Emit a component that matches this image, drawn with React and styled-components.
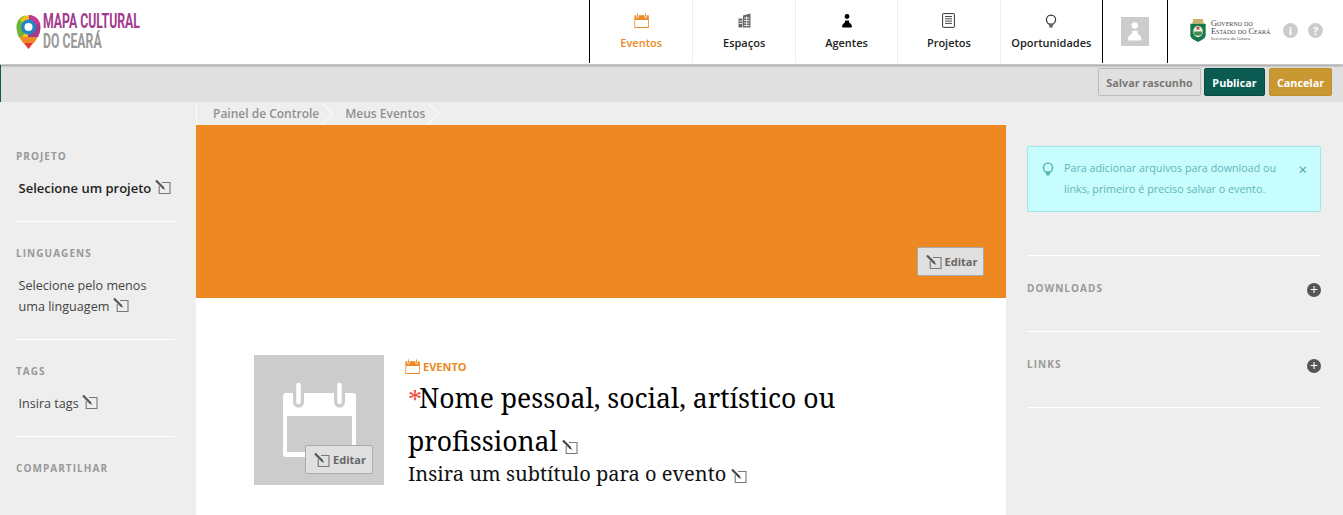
import styled, { createGlobalStyle } from "styled-components";

const GlobalStyle = createGlobalStyle`
    html, body {
        margin: 0;
        height: 100%;
        overflow: hidden;
        background: #eeeeee;
        font-family: "Open Sans", sans-serif;
    }
    * {
        box-sizing: border-box;
    }
`;

function CalendarIcon({ size = 16, color = "#ED8823" }) {
    return (
        <svg width={size} height={size * 78 / 76} viewBox="0 0 76 78">
            <path
                fill={color}
                fillRule="evenodd"
                d="M5 12h7v9a5.500 5.500 0 0 0 11 0v-9h30v9a5.500 5.500 0 0 0 11 0v-9h8a3 3 0 0 1 3 3v58a3 3 0 0 1-3 3H5a3 3 0 0 1-3-3V15a3 3 0 0 1 3-3zM6 35v36h65V35z"
            />
            <path stroke={color} strokeWidth="4.500" strokeLinecap="round" d="M17.500 4v17M58.500 4v17" />
        </svg>
    );
}

function BuildingIcon() {
    return (
        <svg width="13" height="15" viewBox="0 0 13 15">
            <path fill="#666" d="M5 2.500 12.500.500V14.500H5zM.5 5.500H4.400V14.500H.5z" />
            <path stroke="#fff" strokeWidth=".8" d="M6 5h5.500M6 7.500h5.500M6 10h5.500M6 12.500h5.500M8.600 3.500v10M1 8h3M1 10.500h3" />
        </svg>
    );
}

function PersonIcon({ height = 14, color = "#000" }) {
    return (
        <svg width={height * 10 / 14} height={height} viewBox="0 0 10 14">
            <circle cx="5" cy="2.500" r="2.400" fill={color} />
            <path fill={color} d="M.9 13.600c-.5 0-.8-.3-.8-.8C.1 11 1 10 2 9.300c.7-.5 1-1 1-1.600V6.500h4v1.200c0 .6.300 1.100 1 1.600 1 .7 1.900 1.700 1.900 3.500 0 .5-.3.800-.8.800z" />
        </svg>
    );
}

function DocIcon() {
    return (
        <svg width="13" height="15" viewBox="0 0 13 15" fill="none" stroke="#333">
            <rect x=".6" y=".6" width="11.800" height="13.800" rx=".6" />
            <path d="M3 3.500h7M3 5.800h7M3 8.100h7M3 10.400h7" strokeWidth=".9" />
        </svg>
    );
}

function BulbIcon({ size = 14, color = "#333", width = 1.2 }) {
    return (
        <svg width={size} height={size} viewBox="0 0 14 14" fill="none" stroke={color} strokeWidth={width}>
            <path d="M4.600 10C3.400 9 2.400 7.800 2.400 5.700a4.600 4.600 0 0 1 9.200 0C11.600 7.800 10.600 9 9.400 10z" />
            <path d="M5 11.200h4M5.500 12.800h3" />
        </svg>
    );
}

function EditIcon({ color = "#555" }) {
    return (
        <svg width="16" height="16" viewBox="0 0 16 16" fill="none">
            <path stroke="#777" strokeWidth="1.100" d="M7 3.500h8v11H4.200V7" />
            <path stroke={color} strokeWidth="2.200" d="M1 1.500 8.500 9" />
            <path fill={color} d="m8 7.600 2.600 3.500-3.600-1.800z" />
        </svg>
    );
}

function PinLogo() {
    return (
        <svg width="25" height="34" viewBox="0 0 25 34">
            <path fill="#E8352E" d="M7 27h11l-5.500 7z" />
            <path fill="#F08A24" d="M2.500 21h20L18 28H7z" />
            <path fill="#F5C01E" d="M.5 12h12v10H3z" />
            <path fill="#6BB536" d="M.5 13C0 6 5 1 9 .500L12.500 12 6 22H2.800C1.500 19 .7 16 .5 13z" />
            <path fill="#A23B8C" d="M12.500.100C19 .100 24.500 5.500 24.500 12c0 4-1 7-2.500 10H12z" />
            <path fill="#C8388F" d="M14 .300c5 .700 9 3.700 10 8.700L15 11z" />
            <path fill="#F5C01E" d="M4 5c2-3 6-5 9-4.800V8H7z" />
            <circle cx="12.500" cy="12" r="7.500" fill="#1E86C8" />
            <circle cx="12.500" cy="12" r="4" fill="#fff" />
        </svg>
    );
}

function GovShield() {
    return (
        <svg width="16" height="23" viewBox="0 0 16 24">
            <path fill="#C9B36A" d="M3 0h10l1 5H2z" />
            <path fill="#17784A" d="M0 5h16v12c0 3-4 5-8 7-4-2-8-4-8-7z" />
            <ellipse cx="8" cy="13" rx="5" ry="6" fill="#E8EED9" />
            <path fill="#4A8A55" d="M4 13h8v3c-1 2-7 2-8 0z" />
            <path fill="#A8574A" d="M6.500 8h3v3h-3z" />
        </svg>
    );
}

const Header = styled.header`
    height: 65px;
    background: #ffffff;
    display: flex;
    justify-content: space-between;
    box-shadow: 0 1px 2px rgba(0, 0, 0, 0.3);
    border-bottom: 1px solid #c8c8c8;
    position: relative;
    z-index: 2;
`;

const Logo = styled.div`
    display: flex;
    align-items: center;
    gap: 2px;
    padding: 0 0 1px 16px;
`;

const LogoText = styled.div`
    font-family: "Roboto", sans-serif;
    font-weight: 700;
    font-size: 20px;
    line-height: 19.500px;
    transform: scaleX(0.612);
    transform-origin: left center;
    white-space: nowrap;
    color: ${(props) => props.$color};
`;

const HeaderRight = styled.div`
    display: flex;
    height: 63px;
`;

const Nav = styled.nav`
    display: flex;
    border-left: 1px solid #000;
    border-right: 1px solid #000;
`;

const NavItem = styled.a`
    width: 102.400px;
    display: flex;
    flex-direction: column;
    align-items: center;
    padding-top: 12px;
    border-left: ${(props) => (props.$first ? "none" : "1px solid #eeeeee")};
    font-size: 11px;
    font-weight: 600;
    color: ${(props) => (props.$active ? "#ED8823" : "#222")};
`;

const NavIcon = styled.div`
    height: 17px;
    display: flex;
    align-items: center;
    margin-bottom: 6px;
`;

const UserBox = styled.div`
    width: 65px;
    border-right: 1px solid #000;
    display: flex;
    align-items: center;
    justify-content: center;
`;

const Avatar = styled.div`
    width: 28px;
    height: 29px;
    background: #cccccc;
    display: flex;
    align-items: center;
    justify-content: center;
`;

const Gov = styled.div`
    width: 175px;
    display: flex;
    align-items: center;
    padding: 0 0 2px 22px;
`;

const GovText = styled.div`
    margin-left: 5px;
    font-family: "Liberation Serif", serif;
    font-size: 8.300px;
    line-height: 8px;
    font-variant: small-caps;
    color: #444;
    width: 62px;
    white-space: nowrap;

    small {
        display: block;
        font-family: "Open Sans", sans-serif;
        font-variant: normal;
        font-size: 4px;
        line-height: 6px;
    }
`;

const RoundIcon = styled.span`
    width: 15px;
    height: 15px;
    border-radius: 50%;
    background: #cccccc;
    color: #fff;
    font-size: 11px;
    font-weight: 700;
    display: flex;
    align-items: center;
    justify-content: center;
    margin-left: ${(props) => props.$gap}px;
`;

const Toolbar = styled.div`
    height: 37px;
    background: #e0e0e0;
    border-left: 1px solid #0a5c52;
    display: flex;
    justify-content: flex-end;
    align-items: flex-start;
    padding: 3px 11px 0 0;
`;

const ToolButton = styled.button`
    width: ${(props) => props.$width}px;
    height: 28px;
    margin-left: ${(props) => props.$gap}px;
    padding: 0;
    border-radius: 2px;
    font-family: inherit;
    font-size: 10.800px;
    font-weight: 700;
    border: 1px solid ${(props) => props.$border};
    background: ${(props) => props.$bg};
    color: ${(props) => props.$color};
`;

const Main = styled.main`
    display: grid;
    grid-template-columns: 196px 810px 337px;
    height: 413px;
    overflow: hidden;
`;

const LeftBar = styled.aside`
    padding: 46px 21px 0 16px;
`;

const SideSection = styled.section`
    padding-bottom: ${(props) => (props.$last ? 0 : 22)}px;
    margin-bottom: 23.100px;
    border-bottom: ${(props) => (props.$last ? "none" : "1px solid #ffffff")};
`;

const SideLabel = styled.h4`
    margin: 0 0 14px;
    font-size: 10px;
    line-height: 16px;
    font-weight: 700;
    letter-spacing: 1.050px;
    color: #999999;
`;

const SideValue = styled.p`
    margin: 0 0 0 2.500px;
    font-size: ${(props) => (props.$strong ? 13 : 12.6)}px;
    line-height: 21px;
    font-weight: ${(props) => (props.$strong ? 600 : 400)};
    color: ${(props) => (props.$strong ? "#222" : "#444")};

    svg {
        vertical-align: -2px;
    }
`;

const Center = styled.div`
    background: #ffffff;
    display: flex;
    flex-direction: column;
`;

const Breadcrumb = styled.div`
    height: 23px;
    background: #eeeeee;
    display: flex;
    font-size: 12px;
    font-weight: 600;
    color: #909090;
    border-left: 1px solid #fafafa;
`;

const Crumb = styled.span`
    position: relative;
    line-height: 23px;
    padding: 0 11px 0 ${(props) => props.$left}px;

    &::after {
        content: "";
        position: absolute;
        right: 0;
        top: 3px;
        width: 16px;
        height: 16px;
        transform: rotate(45deg);
        border-top: 1px solid #fafafa;
        border-right: 1px solid #fafafa;
    }
`;

const Cover = styled.div`
    height: 173px;
    background: #ed8823;
    position: relative;
`;

const EditButton = styled.button`
    position: absolute;
    right: ${(props) => props.$right}px;
    bottom: ${(props) => props.$bottom}px;
    width: ${(props) => props.$width}px;
    height: 29px;
    display: flex;
    align-items: center;
    justify-content: center;
    gap: 3px;
    padding: 0 0 0 2px;
    background: #e0e0e0;
    border: 1px solid #aaaaaa;
    border-radius: 2px;
    font-family: inherit;
    font-size: 11px;
    font-weight: 700;
    color: #666;
`;

const Entity = styled.div`
    display: flex;
    padding: 57px 150px 0 58px;
    gap: 21px;
`;

const Thumb = styled.div`
    width: 130px;
    height: 130px;
    flex: none;
    background: #cccccc;
    position: relative;
    display: flex;
    padding: 26px 0 0 27px;
`;

const Heading = styled.div`
    padding-top: 4px;
`;

const TypeLabel = styled.div`
    display: flex;
    align-items: center;
    gap: 3px;
    font-size: 11px;
    line-height: 16px;
    font-weight: 700;
    color: #ed8823;
`;

const Title = styled.h2`
    margin: 2px 0 0 3px;
    font-family: "Noto Serif", "DejaVu Serif", serif;
    font-weight: 400;
    font-size: 26.550px;
    line-height: 43px;
    color: #000;
    width: 440px;

    svg {
        vertical-align: -4px;
        margin-left: -3px;
    }
`;

const Star = styled.span`
    display: inline-block;
    width: 11px;
    font-family: "Liberation Serif", serif;
    font-size: 28px;
    line-height: 1;
    color: #f44336;
`;

const Subtitle = styled.p`
    margin: 0 0 0 3px;
    font-family: "Noto Serif", "DejaVu Serif", serif;
    font-size: 20px;
    line-height: 22px;
    color: #111;
    white-space: nowrap;

    svg {
        vertical-align: -3px;
    }
`;

const RightBar = styled.aside`
    padding: 44px 22px 0 21px;
`;

const Alert = styled.div`
    height: 66px;
    background: #c8fdfd;
    border: 1px solid #9de6ec;
    border-radius: 2px;
    display: flex;
    padding: 11px 13px 0 13px;
    margin-bottom: 43px;
    font-size: 10.750px;
    line-height: 21px;
    color: #62b5b8;

    svg {
        margin-top: 4px;
    }
`;

const AlertText = styled.div`
    width: 230px;
    margin-left: 9px;
`;

const AlertClose = styled.span`
    font-size: 15px;
    margin-left: 5px;
    padding-top: 1px;
    color: #4f9ea3;
`;

const Panel = styled.div`
    height: 76px;
    border-top: 1px solid #ffffff;
    display: flex;
    justify-content: space-between;
    align-items: flex-start;
    padding: 24px 0 0;

    &:last-child {
        height: 1px;
        padding: 0;
    }
`;

const Plus = styled.span`
    width: 14px;
    height: 14px;
    margin: 3px 0 0 0;
    border-radius: 50%;
    background: #555555;
    color: #fff;
    font-size: 14px;
    line-height: 13px;
    text-align: center;
`;

const items = [
    { label: "Eventos", icon: <CalendarIcon size={15} />, active: true },
    { label: "Espaços", icon: <BuildingIcon /> },
    { label: "Agentes", icon: <PersonIcon /> },
    { label: "Projetos", icon: <DocIcon /> },
    { label: "Oportunidades", icon: <BulbIcon /> },
];

export default function App() {
    return (
        <>
            <GlobalStyle />
            <Header>
                <Logo>
                    <PinLogo />
                    <div>
                        <LogoText $color="#A23B8C">MAPA CULTURAL</LogoText>
                        <LogoText $color="#999999">DO CEARÁ</LogoText>
                    </div>
                </Logo>
                <HeaderRight>
                    <Nav>
                        {items.map((item, index) => (
                            <NavItem key={item.label} $first={index === 0} $active={item.active}>
                                <NavIcon>{item.icon}</NavIcon>
                                {item.label}
                            </NavItem>
                        ))}
                    </Nav>
                    <UserBox>
                        <Avatar>
                            <PersonIcon height={19} color="#fff" />
                        </Avatar>
                    </UserBox>
                    <Gov>
                        <GovShield />
                        <GovText>
                            Governo do<br />
                            Estado do Ceará
                            <small>Secretaria da Cultura</small>
                        </GovText>
                        <RoundIcon $gap={10}>i</RoundIcon>
                        <RoundIcon $gap={10}>?</RoundIcon>
                    </Gov>
                </HeaderRight>
            </Header>
            <Toolbar>
                <ToolButton $width={103} $gap={0} $bg="#e0e0e0" $border="#bbbbbb" $color="#777">Salvar rascunho</ToolButton>
                <ToolButton $width={61} $gap={3} $bg="#0a5c52" $border="#084a42" $color="#fff">Publicar</ToolButton>
                <ToolButton $width={63} $gap={4} $bg="#c99833" $border="#c09030" $color="#fff">Cancelar</ToolButton>
            </Toolbar>
            <Main>
                <LeftBar>
                    <SideSection>
                        <SideLabel>PROJETO</SideLabel>
                        <SideValue $strong>Selecione um projeto <EditIcon /></SideValue>
                    </SideSection>
                    <SideSection>
                        <SideLabel>LINGUAGENS</SideLabel>
                        <SideValue>Selecione pelo menos uma linguagem <EditIcon /></SideValue>
                    </SideSection>
                    <SideSection>
                        <SideLabel>TAGS</SideLabel>
                        <SideValue>Insira tags <EditIcon /></SideValue>
                    </SideSection>
                    <SideSection $last>
                        <SideLabel>COMPARTILHAR</SideLabel>
                    </SideSection>
                </LeftBar>
                <Center>
                    <Breadcrumb>
                        <Crumb $left={16}>Painel de Controle</Crumb>
                        <Crumb $left={15}>Meus Eventos</Crumb>
                    </Breadcrumb>
                    <Cover>
                        <EditButton $right={22} $bottom={22} $width={67}><EditIcon /> Editar</EditButton>
                    </Cover>
                    <Entity>
                        <Thumb>
                            <CalendarIcon size={76} color="#ffffff" />
                            <EditButton $right={11} $bottom={11} $width={68}><EditIcon /> Editar</EditButton>
                        </Thumb>
                        <Heading>
                            <TypeLabel><CalendarIcon size={15} /> EVENTO</TypeLabel>
                            <Title>
                                <Star>*</Star>Nome pessoal, social, artístico ou profissional <EditIcon color="#444" />
                            </Title>
                            <Subtitle>Insira um subtítulo para o evento <EditIcon color="#444" /></Subtitle>
                        </Heading>
                    </Entity>
                </Center>
                <RightBar>
                    <Alert>
                        <BulbIcon size={14} color="#4fb0b0" width={1.4} />
                        <AlertText>Para adicionar arquivos para download ou links, primeiro é preciso salvar o evento.</AlertText>
                        <AlertClose>×</AlertClose>
                    </Alert>
                    <Panel>
                        <SideLabel>DOWNLOADS</SideLabel>
                        <Plus>+</Plus>
                    </Panel>
                    <Panel>
                        <SideLabel>LINKS</SideLabel>
                        <Plus>+</Plus>
                    </Panel>
                    <Panel />
                </RightBar>
            </Main>
        </>
    );
}
